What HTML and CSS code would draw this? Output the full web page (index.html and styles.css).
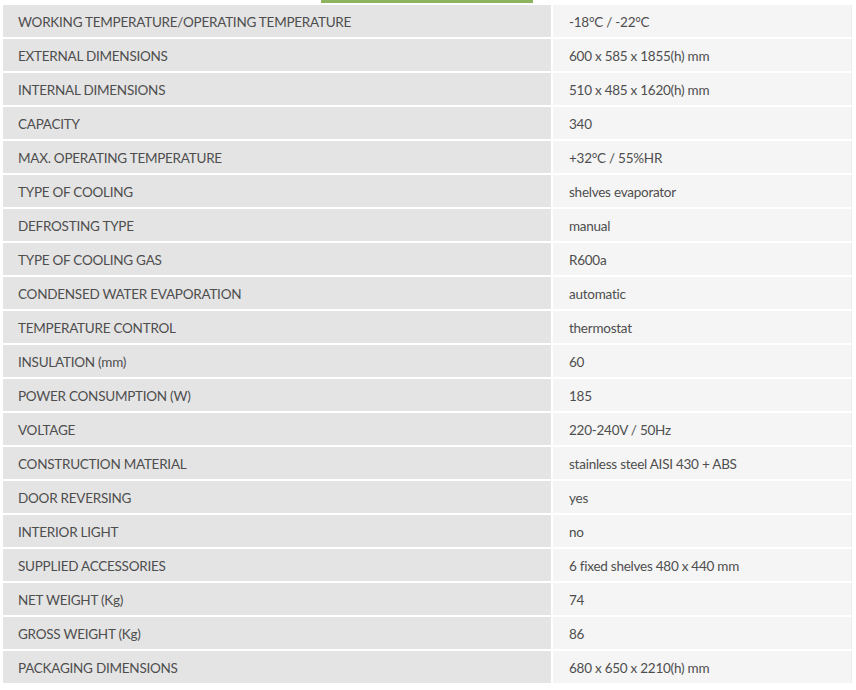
FILE: index.html
```html
<!DOCTYPE html>
<html>
<head>
<meta charset="utf-8">
<link rel="stylesheet" href="styles.css">
</head>
<body>
<div class="tabline"><div class="tabbar"></div></div>
<table class="specs">
<colgroup><col class="ck"><col class="cv"></colgroup>
<tr><td class="k">WORKING TEMPERATURE/OPERATING TEMPERATURE</td><td class="v">-18°C / -22°C</td></tr>
<tr><td class="k">EXTERNAL DIMENSIONS</td><td class="v">600 x 585 x 1855(h) mm</td></tr>
<tr><td class="k">INTERNAL DIMENSIONS</td><td class="v">510 x 485 x 1620(h) mm</td></tr>
<tr><td class="k">CAPACITY</td><td class="v">340</td></tr>
<tr><td class="k">MAX. OPERATING TEMPERATURE</td><td class="v">+32°C / 55%HR</td></tr>
<tr><td class="k">TYPE OF COOLING</td><td class="v">shelves evaporator</td></tr>
<tr><td class="k">DEFROSTING TYPE</td><td class="v">manual</td></tr>
<tr><td class="k">TYPE OF COOLING GAS</td><td class="v">R600a</td></tr>
<tr><td class="k">CONDENSED WATER EVAPORATION</td><td class="v">automatic</td></tr>
<tr><td class="k">TEMPERATURE CONTROL</td><td class="v">thermostat</td></tr>
<tr><td class="k">INSULATION (mm)</td><td class="v">60</td></tr>
<tr><td class="k">POWER CONSUMPTION (W)</td><td class="v">185</td></tr>
<tr><td class="k">VOLTAGE</td><td class="v">220-240V / 50Hz</td></tr>
<tr><td class="k">CONSTRUCTION MATERIAL</td><td class="v">stainless steel AISI 430 + ABS</td></tr>
<tr><td class="k">DOOR REVERSING</td><td class="v">yes</td></tr>
<tr><td class="k">INTERIOR LIGHT</td><td class="v">no</td></tr>
<tr><td class="k">SUPPLIED ACCESSORIES</td><td class="v">6 fixed shelves 480 x 440 mm</td></tr>
<tr><td class="k">NET WEIGHT (Kg)</td><td class="v">74</td></tr>
<tr><td class="k">GROSS WEIGHT (Kg)</td><td class="v">86</td></tr>
<tr><td class="k">PACKAGING DIMENSIONS</td><td class="v">680 x 650 x 2210(h) mm</td></tr>
</table>
</body>
</html>
```
FILE: styles.css
```css
html, body {
  margin: 0;
  padding: 0;
  background: #ffffff;
}
body {
  font-family: Lato, "Liberation Sans", sans-serif;
  font-size: 13.5px;
  letter-spacing: -0.25px;
  color: #4e4e4e;
}
.tabline {
  height: 3px;
  padding-left: 321px;
}
.tabbar {
  width: 212px;
  height: 3px;
  background: #8db35f;
}
.specs {
  border-collapse: separate;
  border-spacing: 2px 2.1px;
  margin-left: 1px;
  width: 853px;
  table-layout: fixed;
}
.ck {
  width: 548px;
}
.specs td {
  height: 32px;
  padding: 1px 0 0 15px;
  box-sizing: border-box;
  vertical-align: middle;
  line-height: 18px;
  white-space: nowrap;
}
.specs .k {
  background: #e4e4e4;
}
.specs .v {
  padding-left: 16px;
  background: #f5f5f5;
  border-right: 1px solid #ececec;
}
```
